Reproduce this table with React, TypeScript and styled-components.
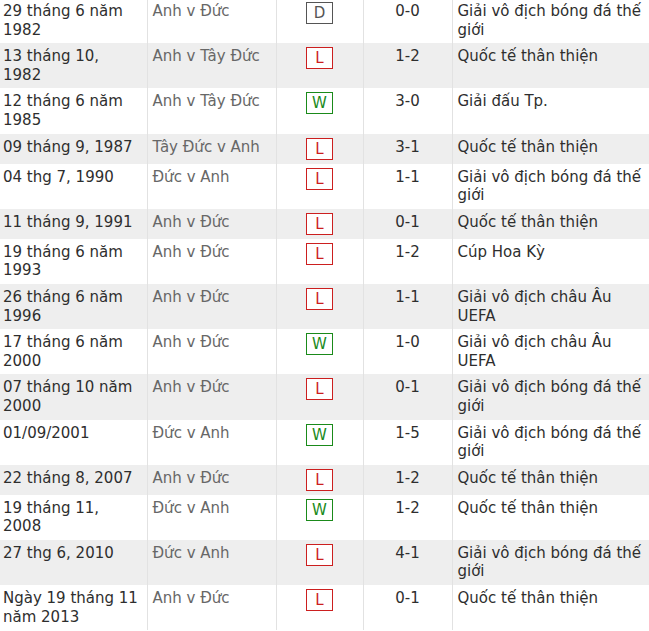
import styled, { createGlobalStyle } from 'styled-components';

type Result = 'W' | 'D' | 'L';

interface Match {
  date: string;
  teams: string;
  result: Result;
  score: string;
  competition: string;
}

const matches: Match[] = [
  { date: '29 tháng 6 năm 1982', teams: 'Anh v Đức', result: 'D', score: '0-0', competition: 'Giải vô địch bóng đá thế giới' },
  { date: '13 tháng 10, 1982', teams: 'Anh v Tây Đức', result: 'L', score: '1-2', competition: 'Quốc tế thân thiện' },
  { date: '12 tháng 6 năm 1985', teams: 'Anh v Tây Đức', result: 'W', score: '3-0', competition: 'Giải đấu Tp.' },
  { date: '09 tháng 9, 1987', teams: 'Tây Đức v Anh', result: 'L', score: '3-1', competition: 'Quốc tế thân thiện' },
  { date: '04 thg 7, 1990', teams: 'Đức v Anh', result: 'L', score: '1-1', competition: 'Giải vô địch bóng đá thế giới' },
  { date: '11 tháng 9, 1991', teams: 'Anh v Đức', result: 'L', score: '0-1', competition: 'Quốc tế thân thiện' },
  { date: '19 tháng 6 năm 1993', teams: 'Anh v Đức', result: 'L', score: '1-2', competition: 'Cúp Hoa Kỳ' },
  { date: '26 tháng 6 năm 1996', teams: 'Anh v Đức', result: 'L', score: '1-1', competition: 'Giải vô địch châu Âu UEFA' },
  { date: '17 tháng 6 năm 2000', teams: 'Anh v Đức', result: 'W', score: '1-0', competition: 'Giải vô địch châu Âu UEFA' },
  { date: '07 tháng 10 năm 2000', teams: 'Anh v Đức', result: 'L', score: '0-1', competition: 'Giải vô địch bóng đá thế giới' },
  { date: '01/09/2001', teams: 'Đức v Anh', result: 'W', score: '1-5', competition: 'Giải vô địch bóng đá thế giới' },
  { date: '22 tháng 8, 2007', teams: 'Anh v Đức', result: 'L', score: '1-2', competition: 'Quốc tế thân thiện' },
  { date: '19 tháng 11, 2008', teams: 'Đức v Anh', result: 'W', score: '1-2', competition: 'Quốc tế thân thiện' },
  { date: '27 thg 6, 2010', teams: 'Đức v Anh', result: 'L', score: '4-1', competition: 'Giải vô địch bóng đá thế giới' },
  { date: 'Ngày 19 tháng 11 năm 2013', teams: 'Anh v Đức', result: 'L', score: '0-1', competition: 'Quốc tế thân thiện' },
];

const resultColors: Record<Result, string> = {
  W: '#1a8a1a',
  D: '#555555',
  L: '#cc1f1f',
};

const columnWidths = [149, 129, 87, 89, 197];

const GlobalStyle = createGlobalStyle`
  html, body {
    margin: 0;
    padding: 0;
    background: #ffffff;
    overflow: hidden;
  }
  body {
    font-family: "DejaVu Sans", Verdana, sans-serif;
    font-size: 15px;
    color: #2e2e2e;
  }
`;

const Table = styled.table`
  margin: -2px 0 0 -2px;
  width: 651px;
  table-layout: fixed;
  border-collapse: collapse;
  border-spacing: 0;
`;

const Column = styled.col<{ $width: number }>`
  width: ${(p) => p.$width}px;
`;

const Row = styled.tr<{ $striped: boolean }>`
  background: ${(p) => (p.$striped ? '#eeeeee' : '#ffffff')};
`;

const Cell = styled.td<{ $align?: 'left' | 'center'; $muted?: boolean }>`
  padding: 4px 5px;
  vertical-align: top;
  line-height: 18.6px;
  text-align: ${(p) => p.$align ?? 'left'};
  color: ${(p) => (p.$muted ? '#676767' : '#2e2e2e')};
  border-right: 1px solid #e2e2e2;

  &:last-child {
    border-right: none;
  }
`;

const Badge = styled.span<{ $result: Result }>`
  display: block;
  box-sizing: border-box;
  width: 27px;
  height: 22px;
  margin: 0 auto;
  border: 1px solid ${(p) => resultColors[p.$result]};
  background: #ffffff;
  color: ${(p) => resultColors[p.$result]};
  line-height: 20px;
  text-align: center;
`;

export default function App() {
  return (
    <>
      <GlobalStyle />
      <Table>
        <colgroup>
          {columnWidths.map((w, i) => (
            <Column key={i} $width={w} />
          ))}
        </colgroup>
        <tbody>
          {matches.map((m, i) => (
            <Row key={i} $striped={i % 2 === 1}>
              <Cell>{m.date}</Cell>
              <Cell $muted>{m.teams}</Cell>
              <Cell $align="center">
                <Badge $result={m.result}>{m.result}</Badge>
              </Cell>
              <Cell $align="center">{m.score}</Cell>
              <Cell>{m.competition}</Cell>
            </Row>
          ))}
        </tbody>
      </Table>
    </>
  );
}
